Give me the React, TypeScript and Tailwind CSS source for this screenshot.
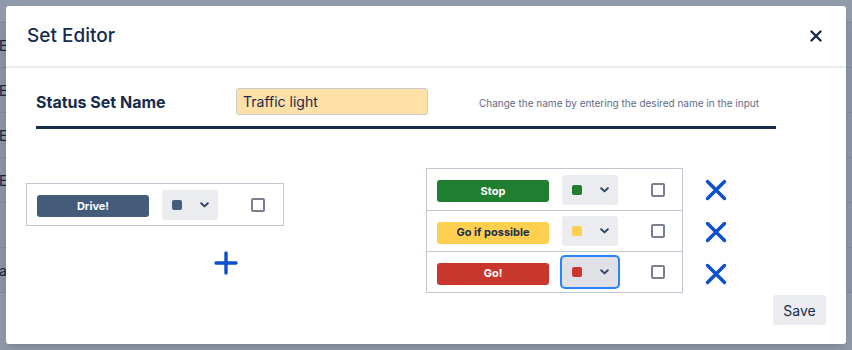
import type React from "react"

type Status = { name: string; bg: string; text: string; dot: string; focused?: boolean }

const statuses: Status[] = [
  { name: "Stop", bg: "bg-[#1f7e2f]", text: "text-white", dot: "bg-[#1f7e2f]" },
  { name: "Go if possible", bg: "bg-[#ffd04f]", text: "text-[#172b4d]", dot: "bg-[#ffd04f]" },
  { name: "Go!", bg: "bg-[#c9372c]", text: "text-white", dot: "bg-[#c9372c]", focused: true },
]

const Chevron = () => (
  <svg width="9" height="6" viewBox="0 0 9 6" fill="none">
    <path d="M1.2 1.2 L4.5 4.4 L7.8 1.2" stroke="#344563" strokeWidth="2" strokeLinecap="round" strokeLinejoin="round" />
  </svg>
)

const CloseIcon = () => (
  <svg width="22" height="22" viewBox="0 0 22 22" fill="none">
    <path d="M2.5 2.5 L19.5 19.5 M19.5 2.5 L2.5 19.5" stroke="#0a4fcb" strokeWidth="3.4" strokeLinecap="round" />
  </svg>
)

const StatusRow: React.FC<{ s: Status; border?: boolean }> = ({ s, border }) => (
  <div className={`flex h-[41px] items-center pl-[10px] ${border ? "border-t border-[#c1c7d0]" : ""}`}>
    <div className="w-[125px]">
      <div
        className={`inline-flex h-[22px] min-w-[112px] items-center justify-center rounded-[3px] px-[8px] text-[11px] font-bold ${s.bg} ${s.text}`}
      >
        {s.name}
      </div>
    </div>
    <div
      className={`flex h-[30px] w-[56px] items-center rounded-[3px] pl-[10px] ${
        s.focused ? "bg-[#dfe1e6] ring-2 ring-[#2684ff]" : "bg-[#ebecf0]"
      }`}
    >
      <span className={`h-[10px] w-[10px] rounded-[2px] ${s.dot}`} />
      <span className="ml-[18px] flex">
        <Chevron />
      </span>
    </div>
    <span className="ml-[33px] h-[14px] w-[14px] rounded-[2px] border-2 border-[#7a7f8f] bg-white" />
  </div>
)

const App: React.FC = () => {
  return (
    <div className="relative h-[350px] w-[852px] overflow-hidden bg-white font-['Inter',sans-serif] text-[#172b4d]">
      {/* page behind the dialog */}
      <div className="flex flex-col">
        <div className="h-[23px] border-b border-[#dfe1e6]" />
        {["Epic", "Epic", "Epic", "Epic", "", "alpha"].map((t, i) => (
          <div key={i} className="flex h-[45px] items-center border-b border-[#dfe1e6] bg-[#f4f5f7] text-[14px]">
            <span className="-ml-[1px]">{t}</span>
          </div>
        ))}
      </div>
      <div className="absolute inset-0 bg-[#091e42]/45" />

      {/* dialog */}
      <div className="absolute top-[6px] right-[6px] bottom-[6px] left-[6px] rounded-[3px] bg-white shadow-lg">
        <header className="flex h-[62px] items-center justify-between border-b-2 border-[#ebecf0] pr-[24px] pl-[21px]">
          <h1 className="text-[19px] font-medium text-[#172b4d]">Set Editor</h1>
          <svg width="12" height="12" viewBox="0 0 12 12" fill="none">
            <path d="M1.5 1.5 L10.5 10.5 M10.5 1.5 L1.5 10.5" stroke="#172b4d" strokeWidth="2.4" strokeLinecap="round" />
          </svg>
        </header>

        <div className="pt-[20px]">
          <div className="flex items-center pl-[30px]">
            <div className="w-[200px] text-[16px] font-bold text-[#172b4d]">Status Set Name</div>
            <input
              defaultValue="Traffic light"
              className="h-[27px] w-[192px] rounded-[3px] border border-[#c8ccd2] bg-[#ffe0a6] px-[6px] text-[14px] text-[#172b4d] outline-none"
            />
            <div className="mt-[3px] ml-[51px] text-[10px] text-[#5e6c84]">
              Change the name by entering the desired name in the input
            </div>
          </div>
          <div className="mt-[11px] ml-[30px] h-[3px] w-[740px] bg-[#172b4d]" />

          <div className="mt-[39px] ml-[20px] flex items-start">
            {/* unused status */}
            <div className="mt-[15px] w-[258px]">
              <div className="border border-[#c1c7d0]">
                <StatusRow s={{ name: "Drive!", bg: "bg-[#455b7a]", text: "text-white", dot: "bg-[#455b7a]" }} />
              </div>
              <div className="mt-[25px] ml-[188px] flex">
                <svg width="24" height="24" viewBox="0 0 24 24" fill="none">
                  <path d="M12 2 V22 M2 12 H22" stroke="#0a4fcb" strokeWidth="3.4" strokeLinecap="round" />
                </svg>
              </div>
            </div>

            {/* set statuses */}
            <div className="ml-[142px] w-[257px] border border-[#c1c7d0]">
              {statuses.map((s, i) => (
                <StatusRow key={s.name} s={s} border={i > 0} />
              ))}
            </div>
            <div className="mt-[1px] ml-[22px] flex flex-col">
              {statuses.map((s) => (
                <div key={s.name} className="flex h-[42px] items-center">
                  <CloseIcon />
                </div>
              ))}
            </div>
            <div className="ml-[46px] pt-[127px]">
              <button className="h-[30px] w-[53px] rounded-[3px] bg-[#ebecf0] text-[14px] text-[#172b4d]">Save</button>
            </div>
          </div>
        </div>
      </div>
    </div>
  )
}

export default App
